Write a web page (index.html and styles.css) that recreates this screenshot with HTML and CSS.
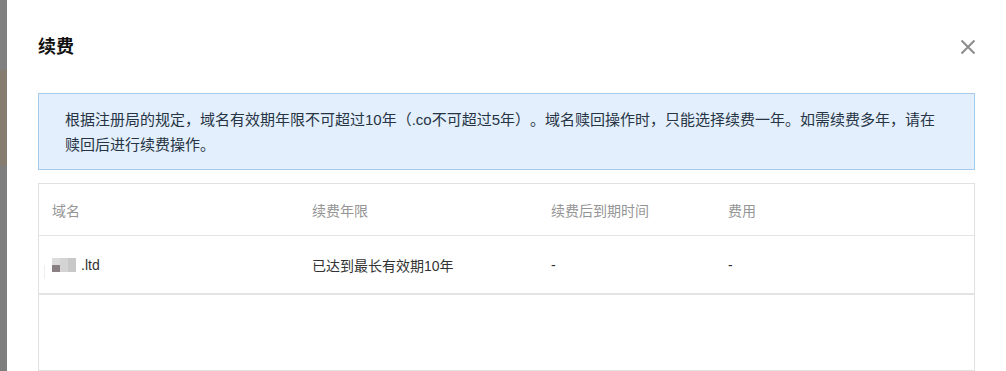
FILE: index.html
```html
<!DOCTYPE html>
<html lang="zh-CN">
<head>
<meta charset="utf-8">
<title>续费</title>
<link rel="stylesheet" href="styles.css">
</head>
<body>
<div class="page">
  <div class="backdrop">
    <div class="bd-top"></div>
    <div class="bd-band"></div>
    <div class="bd-rest"></div>
  </div>
  <div class="modal">
    <div class="modal-header">
      <h2 class="modal-title">续费</h2>
      <button class="close" aria-label="关闭">
        <svg width="16" height="16" viewBox="0 0 16 16"><path d="M1.5 1.5 L14.5 14.5 M14.5 1.5 L1.5 14.5" stroke="#8c8c8c" stroke-width="2" fill="none"/></svg>
      </button>
    </div>
    <div class="notice">根据注册局的规定，域名有效期年限不可超过10年（.co不可超过5年）。域名赎回操作时，只能选择续费一年。如需续费多年，请在赎回后进行续费操作。</div>
    <div class="table">
      <div class="row head">
        <div class="c c1">域名</div>
        <div class="c c2">续费年限</div>
        <div class="c c3">续费后到期时间</div>
        <div class="c c4">费用</div>
      </div>
      <div class="row body">
        <div class="c c1"><span class="blur"><i class="b1"></i><i class="b2"></i><i class="b3"></i></span>.ltd</div>
        <div class="c c2">已达到最长有效期10年</div>
        <div class="c c3">-</div>
        <div class="c c4">-</div>
      </div>
      <div class="empty"></div>
    </div>
  </div>
</div>
</body>
</html>
```

FILE: styles.css
```css
html, body {
  margin: 0;
  padding: 0;
  background: #fff;
}
body {
  font-family: "Liberation Sans", "Noto Sans CJK SC", sans-serif;
  font-size: 14px;
  color: #333;
  text-spacing-trim: space-all;
}
.page {
  display: flex;
  height: 371px;
  overflow: hidden;
}
.backdrop {
  width: 7px;
  flex: none;
  display: flex;
  flex-direction: column;
  background: #7f7f7f;
}
.bd-top { height: 70px; background: #808080; }
.bd-band { height: 96px; background: #857c6f; }
.bd-rest { flex: 1; background: #7e7e7e; }
.modal {
  flex: 1;
  background: #fff;
  padding: 0 31px;
  display: flex;
  flex-direction: column;
}
.modal-header {
  display: flex;
  align-items: center;
  justify-content: space-between;
  padding-top: 30px;
  height: 34px;
}
.modal-title {
  margin: 0;
  font-size: 18px;
  font-weight: bold;
  line-height: 34px;
  color: #111;
}
.close {
  border: 0;
  background: none;
  padding: 0;
  width: 16px;
  height: 16px;
  margin-right: -1px;
  display: flex;
}
.notice {
  margin-top: 29px;
  background: #e3effc;
  border: 1px solid #a7cbea;
  padding: 13px 26px 12px;
  font-size: 15px;
  line-height: 25px;
  color: #263445;
}
.table {
  margin-top: 13px;
  border: 1px solid #e1e1e1;
  flex: 1;
}
.row {
  display: flex;
  align-items: center;
}
.row.head {
  height: 51px;
  color: #959595;
  border-bottom: 1px solid #e3e3e3;
}
.row.body {
  height: 57px;
  border-bottom: 2px solid #e3e3e3;
}
.c { padding-left: 13px; box-sizing: border-box; }
.c1 { width: 260px; display: flex; align-items: center; position: relative; }
.c1::before {
  content: "";
  position: absolute;
  left: 5px;
  top: 8px;
  width: 1px;
  height: 14px;
  background: #ececec;
}
.c2 { width: 239px; }
.c3 { width: 177px; }
.c4 { flex: 1; }
.row.head .c1::before { display: none; }
.blur {
  display: inline-flex;
  margin-right: 5px;
  height: 14px;
  width: 24px;
}
.blur i { display: block; height: 14px; }
.b1 { width: 8px; background: linear-gradient(#dcdcdc 0 50%, #8a7f82 50%); }
.b2 { width: 8px; background: #d4d4d4; }
.b3 { width: 8px; background: #c8c8c8; }
```
